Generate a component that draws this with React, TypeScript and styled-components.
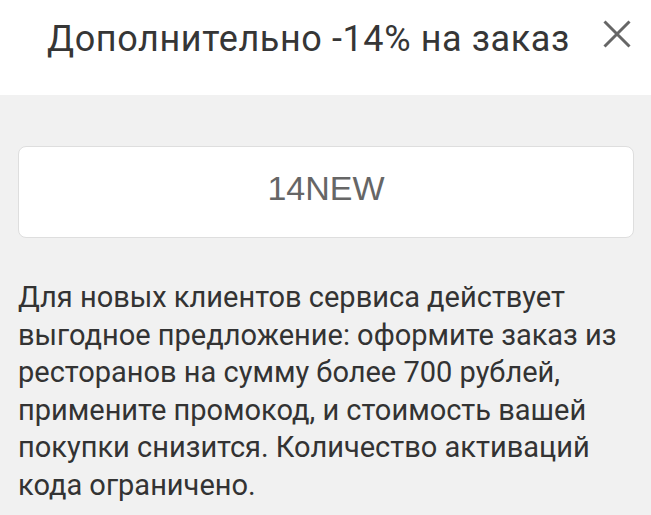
import * as React from 'react';
import styled, {createGlobalStyle} from 'styled-components';

const GlobalStyle = createGlobalStyle`
    html, body {
        margin: 0;
        padding: 0;
        background: #f1f1f1;
    }
`;

const Sheet = styled.div`
    width: 651px;
    height: 515px;
    overflow: hidden;
    background: #f1f1f1;
    font-family: Roboto, 'Noto Sans', sans-serif;
`;

const Header = styled.div`
    height: 95px;
    background: #ffffff;
    display: flex;
    align-items: flex-start;
    justify-content: space-between;
    padding: 21px 18px 0 47px;
    box-sizing: border-box;
`;

const Title = styled.div`
    font-size: 36px;
    line-height: 36px;
    letter-spacing: 0.6px;
    color: #363636;
    white-space: nowrap;
`;

const CloseButton = styled.button`
    width: 32px;
    height: 32px;
    border: 0;
    padding: 0;
    margin-top: -3px;
    background: none;
    cursor: pointer;
    display: flex;
    align-items: center;
    justify-content: center;
`;

const Content = styled.div`
    padding: 51px 10px 0 18px;
`;

const PromoBox = styled.div`
    height: 92px;
    margin-right: 7px;
    padding-bottom: 8px;
    box-sizing: border-box;
    background: #ffffff;
    border: 1px solid #dedede;
    border-radius: 8px;
    display: flex;
    align-items: center;
    justify-content: center;
    font-family: 'Liberation Sans', Arial, sans-serif;
    font-size: 34px;
    color: #666666;
`;

const Description = styled.p`
    margin: 41px 0 0;
    font-size: 29px;
    line-height: 37.5px;
    color: #333333;
`;

export default function App() {
    return (
        <Sheet>
            <GlobalStyle />
            <Header>
                <Title>Дополнительно -14% на заказ</Title>
                <CloseButton aria-label="Закрыть">
                    <svg width="28" height="28" viewBox="0 0 28 28">
                        <path
                            d="M1.5 1.5 L26.5 26.5 M26.5 1.5 L1.5 26.5"
                            stroke="#666666"
                            strokeWidth="3"
                            fill="none"
                        />
                    </svg>
                </CloseButton>
            </Header>
            <Content>
                <PromoBox>14NEW</PromoBox>
                <Description>
                    Для новых клиентов сервиса действует выгодное предложение:
                    оформите заказ из ресторанов на сумму более 700 рублей,
                    примените промокод, и стоимость вашей покупки снизится.
                    Количество активаций кода ограничено.
                </Description>
            </Content>
        </Sheet>
    );
}
